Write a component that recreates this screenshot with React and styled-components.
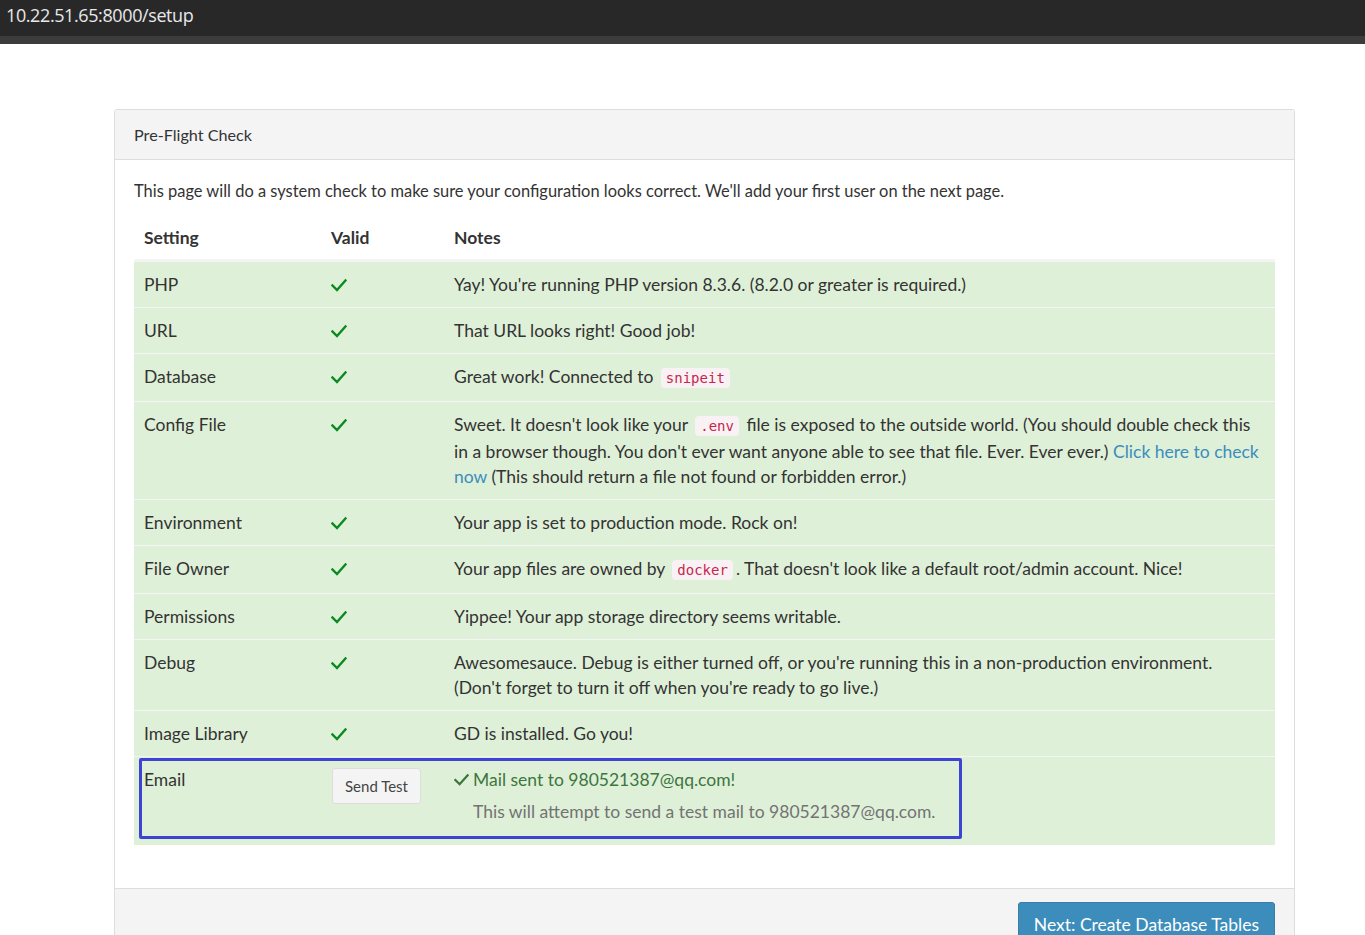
import React from "react";
import styled, { createGlobalStyle } from "styled-components";

const Global = createGlobalStyle`
  html, body { margin: 0; padding: 0; background: #fff; }
  body { font-family: Lato, "Open Sans", sans-serif; color: #333; }
`;

const AddressBar = styled.div`
  height: 36px;
  background: #282828;
  color: #e8e8e8;
  font-family: "Open Sans", sans-serif;
  font-size: 18px;
  line-height: 31px;
  padding-left: 6px;
  letter-spacing: -0.4px;
`;
const AddressShade = styled.div`
  height: 8px;
  background: #3c3c3c;
`;

const Page = styled.div`
  padding: 65px 70px 0 114px;
`;

const Panel = styled.div`
  width: 1179px;
  border: 1px solid #ddd;
  border-bottom: none;
  border-radius: 3px 3px 0 0;
  background: #fff;
`;

const PanelHeader = styled.div`
  background: #f4f4f4;
  border-bottom: 1px solid #ddd;
  height: 49px;
  padding: 0 19px;
  display: flex;
  align-items: center;
  font-size: 16.2px;
  color: #333;
`;

const PanelBody = styled.div`
  padding: 18px 19px 43px 19px;
`;

const Intro = styled.p`
  margin: 0 0 15px 0;
  font-size: 16.45px;
  line-height: 26px;
`;

const Table = styled.div`
  display: grid;
  grid-template-columns: 187px 123px 1fr;
  width: 1141px;
`;

const HeadCell = styled.div`
  font-weight: bold;
  font-size: 17.5px;
  padding: 6px 10px 9px 10px;
  border-bottom: 2px solid #f4f4f4;
  line-height: 25px;
`;

const Cell = styled.div`
  background: #dff0d8;
  border-top: 1px solid #f4f4f4;
  padding: 10px ${(p) => (p.$notes ? 13 : 10)}px 10px 10px;
  font-size: 17.5px;
  line-height: 25px;
  color: #333;
  min-height: ${(p) => p.$min || 25}px;
`;

const CheckWrap = styled.div`
  display: flex;
  align-items: center;
  height: 25px;
  color: #0a8a1f;
`;

const Code = styled.code`
  font-family: "DejaVu Sans Mono", "Liberation Mono", monospace;
  font-size: 14px;
  line-height: 25px;
  color: #c7254e;
  background: #f9f2f4;
  border-radius: 4px;
  padding: 2px 5px;
  margin: 0 3px;
`;

const Link = styled.a`
  color: #3c8dbc;
  text-decoration: none;
`;

const SendButton = styled.button`
  display: block;
  font-family: Lato, "Open Sans", sans-serif;
  font-size: 15px;
  color: #444;
  background: #f4f4f4;
  border: 1px solid #ddd;
  border-radius: 3px;
  padding: 0 12px;
  height: 36px;
  margin-top: 1px;
  margin-left: 1px;
`;

const Success = styled.div`
  color: #3c763d;
  display: flex;
  align-items: center;
  gap: 4px;
  height: 25px;
`;

const Help = styled.div`
  color: #737373;
  padding-left: 19px;
  margin-top: 7px;
`;

const Highlight = styled.div`
  position: absolute;
  left: 139px;
  top: 758px;
  width: 817px;
  height: 75px;
  border: 3px solid #3d43d3;
  border-radius: 2px;
  pointer-events: none;
`;

const PanelFooter = styled.div`
  background: #f4f4f4;
  border-top: 1px solid #ddd;
  padding: 13px 19px 10px 19px;
  display: flex;
  justify-content: flex-end;
`;

const PrimaryButton = styled.button`
  font-family: Lato, "Open Sans", sans-serif;
  font-size: 17.5px;
  white-space: nowrap;
  color: #fff;
  background: #3c8dbc;
  border: 1px solid #367fa9;
  border-radius: 3px;
  padding: 0 15px;
  height: 44px;
  min-width: 255px;
`;

const Check = ({ size = 16 }) => (
  <svg width={size} height={size} viewBox="0 0 16 16">
    <polyline
      points="1.5,8.5 6,13 14.5,3.5"
      fill="none"
      stroke="currentColor"
      strokeWidth="2.4"
      strokeLinecap="square"
    />
  </svg>
);

const rows = [
  ["PHP", <>Yay! You're running PHP version 8.3.6. (8.2.0 or greater is required.)</>],
  ["URL", <>That URL looks right! Good job!</>],
  ["Database", <>Great work! Connected to <Code>snipeit</Code></>],
  [
    "Config File",
    <>
      Sweet. It doesn't look like your <Code>.env</Code> file is exposed to the outside world. (You should double check this in a browser though. You don't ever want anyone able to see that file. Ever. Ever ever.){" "}
      <Link href="#">Click here to check now</Link> (This should return a file not found or forbidden error.)
    </>,
  ],
  ["Environment", <>Your app is set to production mode. Rock on!</>],
  ["File Owner", <>Your app files are owned by <Code>docker</Code>. That doesn't look like a default root/admin account. Nice!</>],
  ["Permissions", <>Yippee! Your app storage directory seems writable.</>],
  [
    "Debug",
    <>
      Awesomesauce. Debug is either turned off, or you're running this in a non-production environment. (Don't forget to turn it off when you're ready to go live.)
    </>,
  ],
  ["Image Library", <>GD is installed. Go you!</>],
];

export default function App() {
  return (
    <>
      <Global />
      <AddressBar>10.22.51.65:8000/setup</AddressBar>
      <AddressShade />
      <Page>
        <Panel>
          <PanelHeader>Pre-Flight Check</PanelHeader>
          <PanelBody>
            <Intro>
              This page will do a system check to make sure your configuration looks correct. We'll add your first user on the next page.
            </Intro>
            <Table>
              <HeadCell>Setting</HeadCell>
              <HeadCell>Valid</HeadCell>
              <HeadCell>Notes</HeadCell>
              {rows.map(([name, note]) => (
                <React.Fragment key={name}>
                  <Cell>{name}</Cell>
                  <Cell>
                    <CheckWrap>
                      <Check />
                    </CheckWrap>
                  </Cell>
                  <Cell $notes>{note}</Cell>
                </React.Fragment>
              ))}
              <Cell $min={68}>Email</Cell>
              <Cell>
                <SendButton>Send Test</SendButton>
              </Cell>
              <Cell $notes>
                <Success>
                  <Check size={15} />
                  Mail sent to 980521387@qq.com!
                </Success>
                <Help>This will attempt to send a test mail to 980521387@qq.com.</Help>
              </Cell>
            </Table>
          </PanelBody>
          <PanelFooter>
            <PrimaryButton>Next: Create Database Tables</PrimaryButton>
          </PanelFooter>
        </Panel>
      </Page>
      <Highlight />
    </>
  );
}
